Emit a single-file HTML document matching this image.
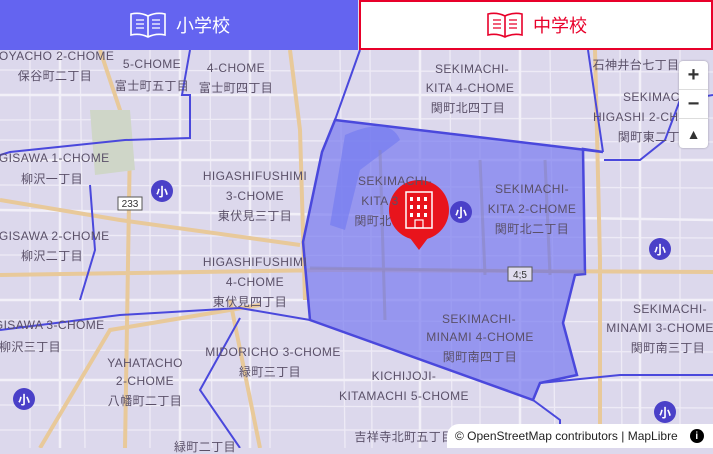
<!DOCTYPE html>
<html><head><meta charset="utf-8"><style>
*{margin:0;padding:0;box-sizing:border-box}
body{width:713px;height:448px;overflow:hidden;position:relative;background:#dcd8ec;font-family:"Liberation Sans","Noto Sans CJK JP",sans-serif}
svg{position:absolute;left:0;top:0}
.tab{position:absolute;top:0;height:50px;display:flex;align-items:center;justify-content:center;font-size:18px;gap:8px}
.l{position:absolute;color:#5a5068;font-size:12px;letter-spacing:.4px;text-align:center;white-space:nowrap;transform:translateX(-50%);line-height:14px}
.ctl{position:absolute;left:679px;top:61px;width:29px;height:87px;background:#fff;border-radius:4px;box-shadow:0 0 2px rgba(0,0,0,.3)}
.ctl div{height:29px;border-bottom:1px solid #ddd;display:flex;align-items:center;justify-content:center;font-size:20px;font-weight:bold;color:#333}
.sch{position:absolute;width:22px;height:22px;border-radius:50%;background:#4a40c8;color:#fff;font-size:12px;display:flex;align-items:center;justify-content:center;font-weight:bold}
.attr{position:absolute;right:0;bottom:0;height:24px;width:266px;background:#fff;border-radius:12px 0 0 0;font-size:12px;color:#222;display:flex;align-items:center;padding-left:8px}
</style></head><body>
<svg width="713" height="448">
<g stroke="#eeebf6" stroke-width="1.3" fill="none">
<path d="M0 70 L713 72 M0 120 L713 118 M0 140 L713 142 M0 185 L713 188 M0 235 L713 238 M0 255 L713 256 M0 320 L713 322 M0 350 L713 352 M0 405 L713 408 M0 430 L713 430 M30 50 L30 448 M80 50 L85 448 M150 50 L150 448 M210 50 L212 448 M270 50 L270 448 M340 50 L345 448 M370 50 L372 448 M450 50 L452 448 M480 50 L480 448 M550 50 L555 448 M620 50 L622 448 M680 50 L680 448"/>
</g>
<g stroke="#f2f0f8" stroke-width="2.5" fill="none">
<path d="M0 95 L713 95 M0 160 L713 160 M0 210 L713 220 M0 300 L713 300 M0 380 L713 380 M60 50 L60 448 M180 50 L180 448 M250 50 L250 448 M420 50 L420 448 M520 50 L520 448 M640 50 L640 448"/>
</g>
<g stroke="#e8c99a" stroke-width="4" fill="none">
<path d="M0 200 L120 220 L300 245 M0 275 L330 270 L713 272 M100 50 L130 140 L125 448 M290 50 L300 130 L305 300 M230 300 L260 448 M595 50 L600 260 L600 448 M40 448 L110 330 L260 305"/>
</g>
<path d="M90 110 L130 110 L135 170 L95 175 Z" fill="#cfd6c8"/>
<path d="M335 120 L603 152 L583 149 L585 274 L575 275 L563 323 L577 375 L540 383 L533 400 L310 320 L303 242 L322 152 Z" fill="#7c7df0" fill-opacity=".72" stroke="#4a48dc" stroke-width="2.5"/>
<path d="M345 135 Q390 115 400 140 L360 170 L345 230 L330 225 Z" fill="#6f78f0" opacity=".6"/>
<path d="M310 268 L585 272 M380 150 L385 320 M480 160 L485 275 M545 160 L550 275" stroke="#8a84b8" stroke-width="3" opacity=".5" fill="none"/>
<g stroke="#4a48dc" stroke-width="2" fill="none">
<path d="M0 155 L10 152 L125 140 L190 138 L190 95 L182 95 L190 50"/>
<path d="M335 120 L360 50"/>
<path d="M603 152 L588 50"/>
<path d="M0 330 L120 315 L240 308 L310 320"/>
<path d="M533 400 L560 420 L560 448"/>
<path d="M540 383 L620 375 L713 375"/>
<path d="M604 160 L640 160 L665 140 L680 100 L713 95"/>
<path d="M240 318 L200 390 L240 448"/>
<path d="M90 185 L95 250 L80 300"/>
</g>
<path d="M419 250 L410 238 L428 238 Z" fill="#e8141c"/>
<circle cx="419" cy="210" r="30" fill="#e8141c"/>
<rect x="406" y="192" width="26" height="36" fill="none" stroke="#fff" stroke-width="1.5"/>
<g fill="#fff"><rect x="410" y="197" width="3" height="4"/><rect x="417" y="197" width="3" height="4"/><rect x="424" y="197" width="3" height="4"/><rect x="410" y="205" width="3" height="4"/><rect x="417" y="205" width="3" height="4"/><rect x="424" y="205" width="3" height="4"/><rect x="410" y="213" width="3" height="4"/><rect x="417" y="213" width="3" height="4"/><rect x="424" y="213" width="3" height="4"/></g>
<rect x="415" y="220" width="8" height="8" fill="none" stroke="#fff" stroke-width="1.2"/>
<rect x="508" y="267" width="24" height="14" fill="#e0dcee" stroke="#555" stroke-width="1"/>
<text x="520" y="278" font-size="10" fill="#333" text-anchor="middle" font-family="Liberation Sans">4;5</text>
<rect x="118" y="197" width="24" height="13" fill="#fff" stroke="#555"/>
<text x="130" y="207" font-size="10" fill="#333" text-anchor="middle" font-family="Liberation Sans">233</text>
</svg>
<div class="tab" style="left:0;width:358px;background:#6464f0;color:#fff">
<svg style="position:static" width="40" height="28" viewBox="0 0 40 28"><path d="M20 5 Q12 1 3 3 L3 24 Q12 22 20 26 Q28 22 37 24 L37 3 Q28 1 20 5 Z M20 5 L20 26" fill="none" stroke="#fff" stroke-width="1.6"/><path d="M8 9h8M8 13h8M8 17h8M24 9h8M24 13h8M24 17h8" stroke="#fff" stroke-width="1.3"/></svg>小学校</div>
<div class="tab" style="left:359px;width:354px;background:#fff;color:#e8002a;border:2px solid #e8002a">
<svg style="position:static" width="40" height="28" viewBox="0 0 40 28"><path d="M20 5 Q12 1 3 3 L3 24 Q12 22 20 26 Q28 22 37 24 L37 3 Q28 1 20 5 Z M20 5 L20 26" fill="none" stroke="#e8002a" stroke-width="1.6"/><path d="M8 9h8M8 13h8M8 17h8M24 9h8M24 13h8M24 17h8" stroke="#e8002a" stroke-width="1.3"/></svg>中学校</div>
<div class="l" style="left:52px;top:49px">HOYACHO 2-CHOME</div>
<div class="l" style="left:55px;top:69px">保谷町二丁目</div>
<div class="l" style="left:152px;top:57px">5-CHOME</div>
<div class="l" style="left:152px;top:79px">富士町五丁目</div>
<div class="l" style="left:236px;top:61px">4-CHOME</div>
<div class="l" style="left:236px;top:81px">富士町四丁目</div>
<div class="l" style="left:472px;top:62px">SEKIMACHI-</div>
<div class="l" style="left:470px;top:81px">KITA 4-CHOME</div>
<div class="l" style="left:468px;top:101px">関町北四丁目</div>
<div class="l" style="left:636px;top:58px">石神井台七丁目</div>
<div class="l" style="left:660px;top:90px">SEKIMACHI-</div>
<div class="l" style="left:650px;top:110px">HIGASHI 2-CHOME</div>
<div class="l" style="left:655px;top:130px">関町東二丁目</div>
<div class="l" style="left:50px;top:151px">AGISAWA 1-CHOME</div>
<div class="l" style="left:52px;top:172px">柳沢一丁目</div>
<div class="l" style="left:255px;top:169px">HIGASHIFUSHIMI</div>
<div class="l" style="left:255px;top:189px">3-CHOME</div>
<div class="l" style="left:255px;top:209px">東伏見三丁目</div>
<div class="l" style="left:395px;top:174px">SEKIMACHI-</div>
<div class="l" style="left:380px;top:194px">KITA 3</div>
<div class="l" style="left:373px;top:214px">関町北</div>
<div class="l" style="left:532px;top:182px">SEKIMACHI-</div>
<div class="l" style="left:532px;top:202px">KITA 2-CHOME</div>
<div class="l" style="left:532px;top:222px">関町北二丁目</div>
<div class="l" style="left:50px;top:229px">AGISAWA 2-CHOME</div>
<div class="l" style="left:52px;top:249px">柳沢二丁目</div>
<div class="l" style="left:255px;top:255px">HIGASHIFUSHIMI</div>
<div class="l" style="left:255px;top:275px">4-CHOME</div>
<div class="l" style="left:250px;top:295px">東伏見四丁目</div>
<div class="l" style="left:479px;top:312px">SEKIMACHI-</div>
<div class="l" style="left:480px;top:330px">MINAMI 4-CHOME</div>
<div class="l" style="left:480px;top:350px">関町南四丁目</div>
<div class="l" style="left:670px;top:302px">SEKIMACHI-</div>
<div class="l" style="left:660px;top:321px">MINAMI 3-CHOME</div>
<div class="l" style="left:668px;top:341px">関町南三丁目</div>
<div class="l" style="left:45px;top:318px">AGISAWA 3-CHOME</div>
<div class="l" style="left:30px;top:340px">柳沢三丁目</div>
<div class="l" style="left:145px;top:356px">YAHATACHO</div>
<div class="l" style="left:145px;top:374px">2-CHOME</div>
<div class="l" style="left:145px;top:394px">八幡町二丁目</div>
<div class="l" style="left:273px;top:345px">MIDORICHO 3-CHOME</div>
<div class="l" style="left:270px;top:365px">緑町三丁目</div>
<div class="l" style="left:404px;top:369px">KICHIJOJI-</div>
<div class="l" style="left:404px;top:389px">KITAMACHI 5-CHOME</div>
<div class="l" style="left:404px;top:430px">吉祥寺北町五丁目</div>
<div class="l" style="left:205px;top:440px">緑町二丁目</div>
<div class="sch" style="left:151px;top:180px">小</div>
<div class="sch" style="left:450px;top:201px">小</div>
<div class="sch" style="left:649px;top:238px">小</div>
<div class="sch" style="left:13px;top:388px">小</div>
<div class="sch" style="left:654px;top:401px">小</div>
<div class="ctl"><div>+</div><div>−</div><div style="border:0;font-size:14px">▲</div></div>
<div class="attr">© OpenStreetMap contributors | MapLibre <span style="margin-left:12px;width:14px;height:14px;border-radius:50%;background:#000;color:#fff;font-size:10px;display:inline-flex;align-items:center;justify-content:center;font-weight:bold">i</span></div>
</body></html>
